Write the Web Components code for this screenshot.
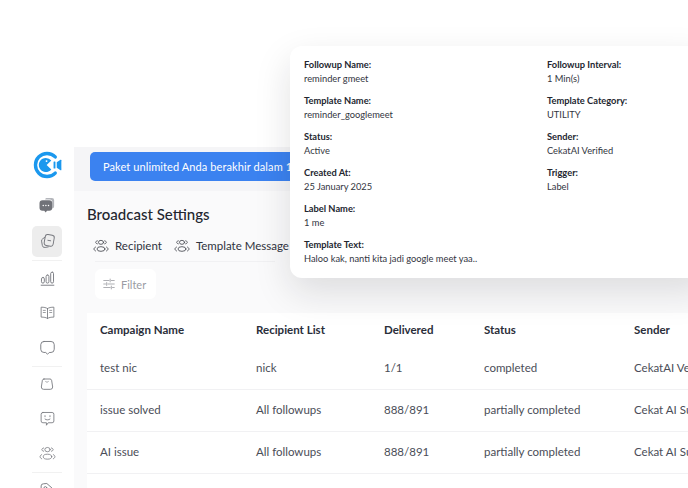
<!DOCTYPE html>
<html lang="en">
<head>
<meta charset="utf-8">
<title>Broadcast Settings</title>
<style>
  html, body { margin: 0; height: 100%; background: #fff; overflow: hidden; }
  body { font-family: Lato, "Open Sans", sans-serif; color: #2b3040; }
</style>
</head>
<body>
<app-shell>
  <side-nav slot="nav"></side-nav>
  <notice-banner slot="top">Paket unlimited Anda berakhir dalam 1</notice-banner>
  <page-head slot="main" title-text="Broadcast Settings"></page-head>
  <filter-button slot="main">Filter</filter-button>
  <campaign-table slot="main"></campaign-table>
</app-shell>
<detail-popup>
  <detail-field label="Followup Name:">reminder gmeet</detail-field>
  <detail-field label="Followup Interval:">1 Min(s)</detail-field>
  <detail-field label="Template Name:">reminder_googlemeet</detail-field>
  <detail-field label="Template Category:">UTILITY</detail-field>
  <detail-field label="Status:">Active</detail-field>
  <detail-field label="Sender:">CekatAI Verified</detail-field>
  <detail-field label="Created At:">25 January 2025</detail-field>
  <detail-field label="Trigger:">Label</detail-field>
  <detail-field label="Label Name:" wide>1 me</detail-field>
  <detail-field label="Template Text:" wide>Haloo kak, nanti kita jadi google meet yaa..</detail-field>
</detail-popup>

<script>
// icons are all drawn on a 24 box, stroke colour comes from the host
const ICONS = {
  chats: `<path d="M11 2.500h7.500a3 3 0 0 1 3 3v8a3 3 0 0 1-2.500 3V8a3.500 3.500 0 0 0-3.500-3.500H9.500a3 3 0 0 1 1.500-2z" fill="#b4b6bb" stroke="none"/><path d="M6 5.500h9a4 4 0 0 1 4 4v6a4 4 0 0 1-4 4h-3l-1.800 2.500-1.800-2.500H6a4 4 0 0 1-4-4v-6a4 4 0 0 1 4-4z" fill="#707278" stroke="none"/><circle cx="7" cy="12.500" r="1" fill="#fff" stroke="none"/><circle cx="10.500" cy="12.500" r="1" fill="#fff" stroke="none"/><circle cx="14" cy="12.500" r="1" fill="#fff" stroke="none"/>`,
  cards: `<path d="M9 6.500 6 8.500a3 3 0 0 0-1.500 3l1 5.500a3 3 0 0 0 3.500 2.500l4-.7" /><rect x="8.500" y="3.500" width="11.500" height="14" rx="3" transform="rotate(10 14 10)"/><path d="M12.500 10.500l3.500.6"/>`,
  chart: `<rect x="3.500" y="10.500" width="4" height="8" rx="2"/><rect x="10" y="7" width="4" height="11.500" rx="2"/><rect x="16.500" y="3" width="4" height="15.500" rx="2"/><path d="M3 21.500h18"/>`,
  book: `<path d="M12 6.500C10 5 7 4.500 3 4.500v14c4 0 7 .5 9 2 2-1.500 5-2 9-2v-14c-4 0-7 .5-9 2zM12 6.500v14"/><path d="M6 9h3M6 12h3M15 9h3M15 12h3" stroke-width="1"/>`,
  bubble: `<path d="M7 3.500h10A4.500 4.500 0 0 1 21.500 8v6.500a4.500 4.500 0 0 1-4.500 4.500h-2.500L12 21.500 9.500 19H7a4.500 4.500 0 0 1-4.500-4.500V8A4.500 4.500 0 0 1 7 3.500z"/>`,
  bag: `<path d="M7.500 4.500h9a2.500 2.500 0 0 1 2.400 1.800l1.600 10.200a3.500 3.500 0 0 1-3.500 3.500H7a3.500 3.500 0 0 1-3.500-3.500L5.100 6.300A2.500 2.500 0 0 1 7.500 4.500z"/><path d="M10 8.500c1 1 3 1 4 0" stroke-width="1"/>`,
  smile: `<path d="M5.500 3.500h13a2.500 2.500 0 0 1 2.500 2.500v9.500a2.500 2.500 0 0 1-2.500 2.500H13l-2.500 3.500V18h-5A2.500 2.500 0 0 1 3 15.500V6a2.500 2.500 0 0 1 2.500-2.500z"/><path d="M8.500 8v1.500M15.500 8v1.500"/><path d="M8.500 12.800c2 1.600 5 1.600 7 0"/>`,
  people: `<ellipse cx="12" cy="6.500" rx="3.800" ry="3"/><ellipse cx="12" cy="16.500" rx="6" ry="3.500"/><path d="M6.500 4.200C5 4.500 4 5.500 4 6.500s1 2 2.500 2.300M17.500 4.200C19 4.500 20 5.500 20 6.500s-1 2-2.500 2.300M3.800 13.600C2.300 14.300 1.500 15.400 1.500 16.500s.8 2.200 2.300 2.900M20.200 13.600c1.500.7 2.300 1.800 2.300 2.900s-.8 2.200-2.300 2.900"/>`,
  tag: `<path d="M11.500 2.500 20 10a3 3 0 0 1 .2 4.300L14 20.500a3 3 0 0 1-4.300-.1L3 13V5.500a3 3 0 0 1 3-3z"/><circle cx="9" cy="8.500" r="2"/>`,
  sliders: `<path d="M3 6h9M16 6h5M3 12h3M10 12h11M3 18h11M18 18h3"/><path d="M14 3.500v5M8 9.500v5M16 15.500v5"/>`
};

class UiIcon extends HTMLElement {
  connectedCallback() {
    const size = this.getAttribute('size') || 24;
    const sw = this.getAttribute('stroke') || 1.5;
    this.attachShadow({ mode: 'open' }).innerHTML = `
      <style>
        :host { display: inline-flex; width: ${size}px; height: ${size}px; flex: none; }
        svg { width: 100%; height: 100%; fill: none; stroke: currentColor; stroke-width: ${sw}; stroke-linecap: round; stroke-linejoin: round; }
      </style>
      <svg viewBox="0 0 24 24">${ICONS[this.getAttribute('name')]}</svg>`;
  }
}
customElements.define('ui-icon', UiIcon);

class AppShell extends HTMLElement {
  constructor() {
    super();
    this.attachShadow({ mode: 'open' }).innerHTML = `
      <style>
        :host { display: flex; height: 488px; padding-top: 147px; box-sizing: border-box; overflow: hidden; }
        .nav { width: 74px; flex: none; background: #fff; }
        .content { flex: 1; min-width: 0; display: flex; flex-direction: column; background: #fafafb; }
        .top { height: 44px; flex: none; padding: 5px 0 0 16px; box-sizing: border-box; background: #f5f5f7; }
        .main { flex: 1; padding-left: 13px; display: flex; flex-direction: column; min-width: 0; }
      </style>
      <div class="nav"><slot name="nav"></slot></div>
      <div class="content">
        <div class="top"><slot name="top"></slot></div>
        <div class="main"><slot name="main"></slot></div>
      </div>`;
  }
}
customElements.define('app-shell', AppShell);

class SideNav extends HTMLElement {
  constructor() {
    super();
    this.attachShadow({ mode: 'open' }).innerHTML = `
      <style>
        :host { display: flex; flex-direction: column; align-items: center; color: #75777d; padding-left: 20px; width: 54px; box-sizing: content-box; height: 360px; }
        .logo { width: 32px; height: 32px; margin-top: 3px; }
        .item { width: 30px; height: 31px; border-radius: 5px; display: flex; align-items: center; justify-content: center; flex: none; }
        .active { background: #ededed; }
        hr { width: 30px; margin: 0; border: 0; border-top: 1px solid #f1f1f1; flex: none; }
      </style>
      <svg class="logo" viewBox="0 0 32 32">
        <path d="M24.800 7.400A12.300 12.300 0 1 0 24.800 24.600" fill="none" stroke="#1b98ee" stroke-width="3.600" stroke-linecap="round"/>
        <path d="M14.800 8.500a7.500 7.500 0 1 0 5.800 12.200l-5-4.700 5-4.700a7.500 7.500 0 0 0-5.800-2.800z" fill="#1b98ee"/>
        <circle cx="15.500" cy="11.800" r="1" fill="#fff"/>
        <rect x="23" y="12.200" width="2" height="7.600" rx=".6" fill="#1b98ee"/>
        <path d="M26.400 13l4-2.500a.6.600 0 0 1 .9.500v10a.6.600 0 0 1-.9.500l-4-2.500z" fill="#1b98ee"/>
      </svg>
      <div class="item" style="margin-top:7px;height:35px"><ui-icon name="chats" size="18"></ui-icon></div>
      <div class="item active" style="margin-top:4px"><ui-icon name="cards" size="19" stroke="1.200"></ui-icon></div>
      <hr style="margin-top:3px">
      <div class="item" style="margin-top:1px;height:32px"><ui-icon name="chart" size="17" stroke="1.300"></ui-icon></div>
      <div class="item" style="height:35px;margin-top:1px"><ui-icon name="book" size="17" stroke="1.200"></ui-icon></div>
      <div class="item" style="height:35px"><ui-icon name="bubble" size="17" stroke="1.300"></ui-icon></div>
      <hr style="margin-top:1px">
      <div class="item" style="height:34px"><ui-icon name="bag" size="16" stroke="1.300"></ui-icon></div>
      <div class="item" style="height:35px"><ui-icon name="smile" size="17" stroke="1.200"></ui-icon></div>
      <div class="item" style="height:35px"><ui-icon name="people" size="17" stroke="1.100"></ui-icon></div>
      <hr style="margin-top:1px">
      <div class="item" style="height:34px"><ui-icon name="tag" size="17" stroke="1.300"></ui-icon></div>`;
  }
}
customElements.define('side-nav', SideNav);

class NoticeBanner extends HTMLElement {
  constructor() {
    super();
    this.attachShadow({ mode: 'open' }).innerHTML = `
      <style>
        :host { display: flex; align-items: center; width: 330px; height: 29px; padding-left: 13px; box-sizing: border-box; background: #3b82f0; color: #fff; border-radius: 5px; font-size: 11px; letter-spacing: .1px; white-space: nowrap; overflow: hidden; }
      </style>
      <slot></slot>`;
  }
}
customElements.define('notice-banner', NoticeBanner);

class PageHead extends HTMLElement {
  connectedCallback() {
    this.attachShadow({ mode: 'open' }).innerHTML = `
      <style>
        :host { display: block; }
        h1 { margin: 13px 0 0; font-size: 15px; line-height: 20px; font-weight: 500; color: #23262f; }
        nav { display: flex; gap: 12px; margin: 13px 0 0 6px; padding-bottom: 6px; font-size: 11.500px; line-height: 18px; color: #2f3340; }
        span { display: inline-flex; align-items: center; gap: 6px; white-space: nowrap; }
        hr { margin: 0 0 0 8px; width: 180px; border: 0; border-top: 1px solid #f1f1f3; }
        ui-icon { color: #4a4d54; }
      </style>
      <h1>${this.getAttribute('title-text')}</h1>
      <nav>
        <span><ui-icon name="people" size="16" stroke="1.300"></ui-icon>Recipient</span>
        <span><ui-icon name="people" size="16" stroke="1.300"></ui-icon>Template Message</span>
      </nav>
      <hr>`;
  }
}
customElements.define('page-head', PageHead);

class FilterButton extends HTMLElement {
  constructor() {
    super();
    this.attachShadow({ mode: 'open' }).innerHTML = `
      <style>
        :host { display: inline-flex; align-self: flex-start; align-items: center; gap: 5px; margin: 7px 0 14px 8px; height: 30px; padding: 0 10px 0 7px; background: #fff; border-radius: 6px; font-size: 11px; color: #9a9ca3; }
        ui-icon { color: #8b8d93; }
      </style>
      <ui-icon name="sliders" size="14" stroke="1.200"></ui-icon><slot></slot>`;
  }
}
customElements.define('filter-button', FilterButton);

class CampaignTable extends HTMLElement {
  constructor() {
    super();
    const rows = [
      ['test nic', 'nick', '1/1', 'completed', 'CekatAI Verified'],
      ['issue solved', 'All followups', '888/891', 'partially completed', 'Cekat AI Support'],
      ['AI issue', 'All followups', '888/891', 'partially completed', 'Cekat AI Support']
    ];
    const cells = (r, tag) => r.map(c => `<${tag}>${c}</${tag}>`).join('');
    this.attachShadow({ mode: 'open' }).innerHTML = `
      <style>
        :host { display: block; flex: 1; background: #fff; font-size: 11.500px; overflow: hidden; }
        table { border-collapse: collapse; table-layout: fixed; width: 680px; }
        th, td { padding: 0 0 0 13px; text-align: left; white-space: nowrap; }
        th { height: 35px; padding-bottom: 3px; box-sizing: border-box; font-weight: 700; color: #2a2e3a; }
        td { height: 39px; padding-bottom: 2px; color: #4a4d57; }
        tbody tr { border-bottom: 1px solid #f1f1f3; }
      </style>
      <table>
        <colgroup><col style="width:156px"><col style="width:128px"><col style="width:100px"><col style="width:150px"><col></colgroup>
        <thead><tr>${cells(['Campaign Name', 'Recipient List', 'Delivered', 'Status', 'Sender'], 'th')}</tr></thead>
        <tbody>${rows.map(r => `<tr>${cells(r, 'td')}</tr>`).join('')}<tr><td colspan="5"></td></tr></tbody>
      </table>`;
  }
}
customElements.define('campaign-table', CampaignTable);

class DetailPopup extends HTMLElement {
  constructor() {
    super();
    this.attachShadow({ mode: 'open' }).innerHTML = `
      <style>
        :host { position: absolute; left: 290px; top: 46px; width: 420px; height: 232px; padding: 12px 14px 0; box-sizing: border-box; background: #fff; border-radius: 12px; box-shadow: 0 14px 36px rgba(20, 20, 30, .13); display: grid; grid-template-columns: 243px 1fr; grid-auto-rows: 36px; align-content: start; }
      </style>
      <slot></slot>`;
  }
}
customElements.define('detail-popup', DetailPopup);

class DetailField extends HTMLElement {
  connectedCallback() {
    if (this.shadowRoot) return;
    if (this.hasAttribute('wide')) this.style.gridColumn = '1 / -1';
    this.attachShadow({ mode: 'open' }).innerHTML = `
      <style>
        :host { display: block; font-size: 9.300px; line-height: 14px; white-space: nowrap; color: #32353e; }
        b { display: block; font-weight: 700; color: #23262f; }
      </style>
      <b>${this.getAttribute('label')}</b><slot></slot>`;
  }
}
customElements.define('detail-field', DetailField);
</script>
</body>
</html>
